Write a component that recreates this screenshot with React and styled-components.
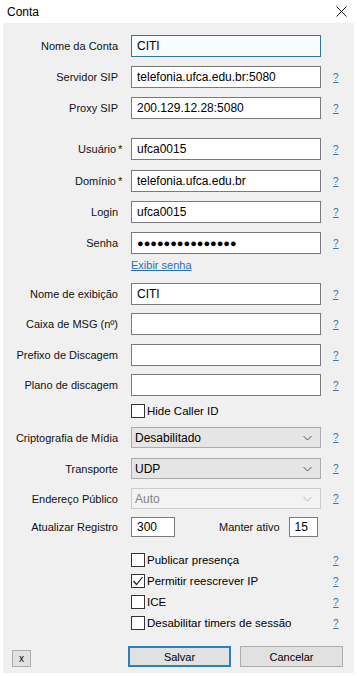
import React from 'react';
import styled, { createGlobalStyle } from 'styled-components';

const GlobalStyle = createGlobalStyle`
  html, body {
    margin: 0;
    padding: 0;
    background: #ffffff;
  }
  body {
    font-family: "Liberation Sans", Arial, sans-serif;
    color: #000;
  }
`

const Window = styled.div`
  width: 357px;
  height: 676px;
  background: #ffffff;
  display: flex;
  flex-direction: column;
`

const TitleBar = styled.div`
  height: 23px;
  display: flex;
  align-items: center;
  justify-content: space-between;
  padding: 0 10px 0 7px;
  font-size: 12px;
  color: #000;
`

const Panel = styled.div`
  margin: 0 3px;
  width: 351px;
  height: 650px;
  box-sizing: border-box;
  background: #f0f0f0;
  padding-top: 12px;
  display: flex;
  flex-direction: column;
`

const Row = styled.div`
  display: grid;
  grid-template-columns: 115px 13px 190px 1fr;
  align-items: center;
  height: ${p => p.$h || 22}px;
  margin-top: ${p => p.$mt || 0}px;
`

const Label = styled.div`
  grid-column: 1;
  text-align: right;
  font-size: 11px;
  color: #111;
  white-space: nowrap;
`

const Star = styled.span`
  display: inline-block;
  width: 0;
  margin-left: 2px;
  overflow: visible;
`

const Input = styled.div`
  grid-column: 3;
  height: 100%;
  box-sizing: border-box;
  border: 1px solid ${p => (p.$focus ? '#2a7aa0' : '#7a7a7a')};
  background: ${p => (p.$focus ? '#f7fcff' : '#ffffff')};
  font-size: ${p => (p.$dots ? '11px' : '12px')};
  padding-left: 5px;
  display: flex;
  align-items: center;
  white-space: nowrap;
  overflow: hidden;
`

const Select = styled.div`
  grid-column: 3;
  height: 100%;
  box-sizing: border-box;
  border: 1px solid ${p => (p.$disabled ? '#cccccc' : '#acacac')};
  background: ${p => (p.$disabled ? '#f3f3f3' : '#e5e5e5')};
  color: ${p => (p.$disabled ? '#838383' : '#000')};
  font-size: 12px;
  padding: 0 8px 0 3px;
  display: flex;
  align-items: center;
  justify-content: space-between;
`

const Help = styled.a`
  grid-column: 4;
  justify-self: start;
  margin-left: 12px;
  font-size: 10px;
  color: #3f6fb4;
  text-decoration: underline;
  cursor: pointer;
`

const LinkRow = styled.div`
  margin: 3px 0 0 128px;
  height: 16px;
  display: flex;
  align-items: center;
`

const ShowLink = styled.a`
  font-size: 11px;
  color: #1f6fbf;
  text-decoration: underline;
`

const CheckRow = styled.div`
  display: grid;
  grid-template-columns: 128px 190px 1fr;
  align-items: center;
  height: 14px;
  margin-top: ${p => p.$mt || 0}px;
`

const CheckField = styled.label`
  grid-column: 2;
  display: flex;
  align-items: center;
  gap: 2px;
  font-size: 11.5px;
  white-space: nowrap;
`

const Box = styled.span`
  width: 14px;
  height: 14px;
  box-sizing: border-box;
  border: 1px solid #333333;
  background: #ffffff;
  display: flex;
  align-items: center;
  justify-content: center;
  flex-shrink: 0;
`

const CheckHelp = styled(Help)`
  grid-column: 3;
`

const TimerRow = styled.div`
  display: flex;
  align-items: center;
  height: 20px;
  margin-top: 8px;
`

const TimerLabel = styled.div`
  width: 115px;
  text-align: right;
  font-size: 11px;
  color: #111;
  margin-right: 13px;
`

const SmallInput = styled(Input)`
  width: ${p => p.$w}px;
  flex: none;
`

const KeepLabel = styled.div`
  font-size: 11px;
  color: #111;
  margin: 0 9px 0 44px;
`

const Footer = styled.div`
  display: flex;
  align-items: center;
  margin-top: 16px;
  height: 21px;
`

const SmallButton = styled.button`
  width: 19px;
  height: 17px;
  margin: 4px 0 0 9px;
  padding: 0;
  box-sizing: border-box;
  border: 1px solid #adadad;
  background: #e1e1e1;
  font-family: "Liberation Sans", Arial, sans-serif;
  font-size: 10px;
  color: #000;
`

const Button = styled.button`
  width: 103px;
  height: 21px;
  margin-left: ${p => p.$ml}px;
  box-sizing: border-box;
  border: ${p => (p.$primary ? '2px solid #2a7fbf' : '1px solid #adadad')};
  background: #e1e1e1;
  font-family: "Liberation Sans", Arial, sans-serif;
  font-size: 11px;
  color: #000;
  padding: 0;
`

function Chevron({ color = '#555' }) {
  return (
    <svg width="9" height="6" viewBox="0 0 9 6">
      <path d="M0.5 1 L4.5 5 L8.5 1" fill="none" stroke={color} strokeWidth="1" />
    </svg>
  );
}

function Check() {
  return (
    <svg width="12" height="12" viewBox="0 0 12 12">
      <path d="M1.5 6 L4.5 9.5 L10.5 2" fill="none" stroke="#222" strokeWidth="1.2" />
    </svg>
  );
}

function Close() {
  return (
    <svg width="11" height="11" viewBox="0 0 11 11">
      <path d="M0.5 0.5 L10.5 10.5 M10.5 0.5 L0.5 10.5" stroke="#111" strokeWidth="1" />
    </svg>
  );
}

function Field({ label, star, value, mt, focus, dots, help = true }) {
  return (
    <Row $mt={mt}>
      <Label>
        {label}
        {star && <Star>*</Star>}
      </Label>
      <Input $focus={focus} $dots={dots}>{value}</Input>
      {help && <Help>?</Help>}
    </Row>
  );
}

function Combo({ label, value, mt, disabled }) {
  return (
    <Row $h={21} $mt={mt}>
      <Label>{label}</Label>
      <Select $disabled={disabled}>
        <span>{value}</span>
        <Chevron color={disabled ? '#b5b5b5' : '#555'} />
      </Select>
      <Help>?</Help>
    </Row>
  );
}

function CheckItem({ label, checked, mt, help = true }) {
  return (
    <CheckRow $mt={mt}>
      <CheckField>
        <Box>{checked && <Check />}</Box>
        {label}
      </CheckField>
      {help && <CheckHelp>?</CheckHelp>}
    </CheckRow>
  );
}

export default function App() {
  return (
    <Window>
      <GlobalStyle />
      <TitleBar>
        <span>Conta</span>
        <Close />
      </TitleBar>
      <Panel>
        <Field label="Nome da Conta" value="CITI" focus help={false} />
        <Field label="Servidor SIP" value="telefonia.ufca.edu.br:5080" mt={9} />
        <Field label="Proxy SIP" value="200.129.12.28:5080" mt={9} />

        <Field label="Usuário" star value="ufca0015" mt={19} />
        <Field label="Domínio" star value="telefonia.ufca.edu.br" mt={10} />
        <Field label="Login" value="ufca0015" mt={9} />
        <Field label="Senha" value="●●●●●●●●●●●●●●●" dots mt={9} />
        <LinkRow>
          <ShowLink>Exibir senha</ShowLink>
        </LinkRow>

        <Field label="Nome de exibição" value="CITI" mt={10} />
        <Field label="Caixa de MSG (nº)" value="" mt={8} />
        <Field label="Prefixo de Discagem" value="" mt={9} />
        <Field label="Plano de discagem" value="" mt={8} />
        <CheckItem label="Hide Caller ID" mt={8} help={false} />

        <Combo label="Criptografia de Mídia" value="Desabilitado" mt={9} />
        <Combo label="Transporte" value="UDP" mt={10} />
        <Combo label="Endereço Público" value="Auto" mt={9} disabled />

        <TimerRow>
          <TimerLabel>Atualizar Registro</TimerLabel>
          <SmallInput $w={44}>300</SmallInput>
          <KeepLabel>Manter ativo</KeepLabel>
          <SmallInput $w={29}>15</SmallInput>
        </TimerRow>

        <CheckItem label="Publicar presença" mt={16} />
        <CheckItem label="Permitir reescrever IP" checked mt={7} />
        <CheckItem label="ICE" mt={7} />
        <CheckItem label="Desabilitar timers de sessão" mt={7} />

        <Footer>
          <SmallButton>x</SmallButton>
          <Button $primary $ml={97}>Salvar</Button>
          <Button $ml={9}>Cancelar</Button>
        </Footer>
      </Panel>
    </Window>
  );
}
